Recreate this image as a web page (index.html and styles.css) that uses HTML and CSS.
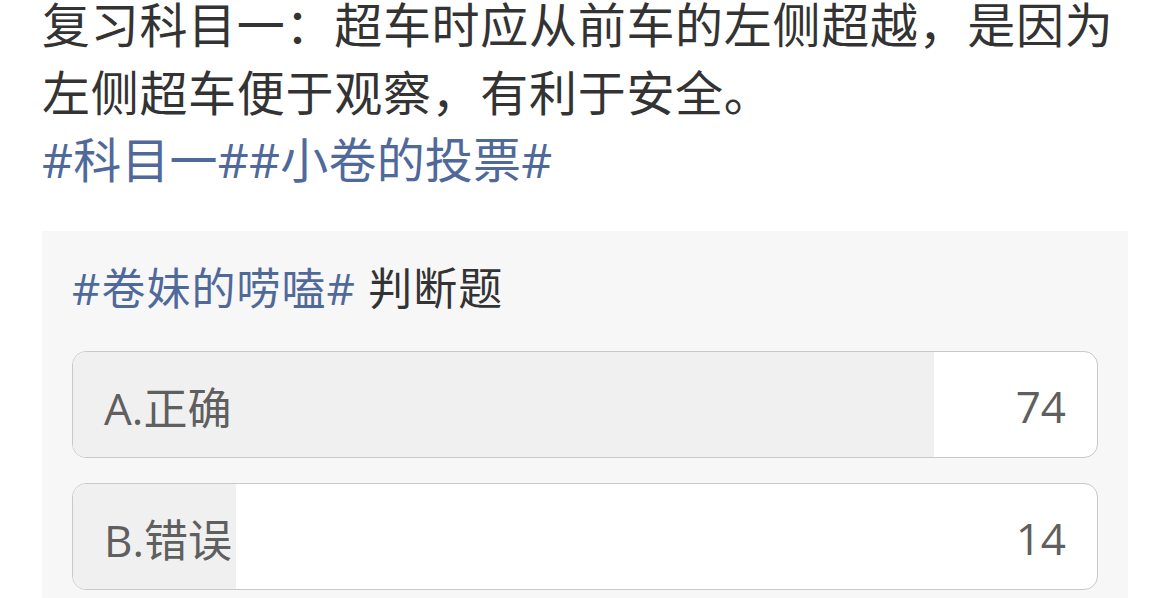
FILE: index.html
```html
<!DOCTYPE html>
<html lang="zh-CN">
<head>
  <meta charset="UTF-8" />
  <meta name="viewport" content="width=device-width, initial-scale=1.0"/>
  <title>小卷的投票</title>
  <link rel="stylesheet" href="styles.css">
</head>
<body>
  <div class="post">
    <div class="post-text">复习科目一：超车时应从前车的左侧超越，是因为左侧超车便于观察，有利于安全。</div>
    <div class="post-tags"><span class="tag">#科目一#</span><span class="tag">#小卷的投票#</span></div>
  </div>

  <div class="poll">
    <div class="poll-title"><span class="tag">#卷妹的唠嗑#</span> 判断题</div>

    <div class="option">
      <div class="option-fill" style="width: 84.1%;"></div>
      <span class="option-label">A.正确</span>
      <span class="option-count">74</span>
    </div>

    <div class="option">
      <div class="option-fill" style="width: 15.9%;"></div>
      <span class="option-label">B.错误</span>
      <span class="option-count">14</span>
    </div>
  </div>
</body>
</html>
```

FILE: styles.css
```css
body {
  margin: 0;
  padding: 0 42px;
  background-color: #ffffff;
  color: #333333;
  font-family: "Open Sans", "Noto Sans CJK SC", sans-serif;
  overflow: hidden;
}

.post {
  margin-top: -9px;
}

.post-text,
.post-tags {
  font-size: 48px;
  line-height: 67.5px;
  letter-spacing: 0.7px;
}

.post-tags {
  letter-spacing: 0.2px;
}

.tag {
  color: #50699b;
}

.poll {
  margin-top: 37px;
  background-color: #f7f7f7;
  padding: 27px 30px 40px;
}

.poll-title {
  font-size: 44px;
  line-height: 60px;
  letter-spacing: 1px;
  color: #333333;
  margin-bottom: 33px;
}

.option {
  position: relative;
  display: flex;
  align-items: center;
  justify-content: space-between;
  height: 101px;
  padding: 4px 31px 0;
  margin-bottom: 25px;
  background-color: #ffffff;
  border: 1px solid #c9c9c9;
  border-radius: 14px;
  overflow: hidden;
  color: #5f5f5f;
  font-size: 44px;
}

.option-fill {
  position: absolute;
  top: 0;
  left: 0;
  bottom: 0;
  background-color: #f0f0f0;
}

.option-label,
.option-count {
  position: relative;
}
```
